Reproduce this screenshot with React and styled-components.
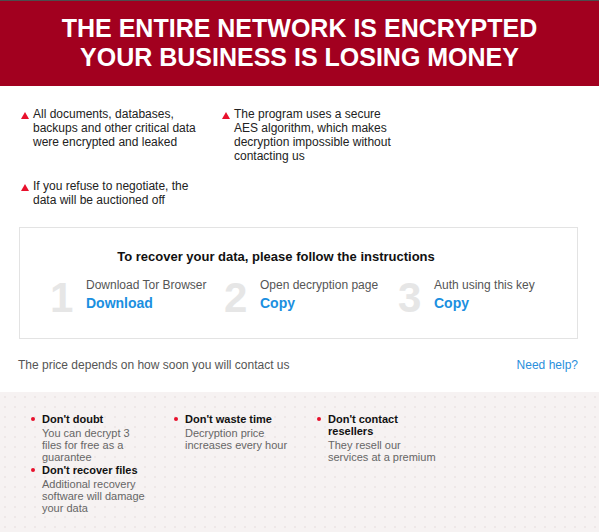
import { createGlobalStyle, styled } from "styled-components";

const GlobalStyle = createGlobalStyle`
    html, body {
        margin: 0;
        padding: 0;
        background: #fff;
    }

    body {
        font-family: "Liberation Sans", Arial, sans-serif;
        color: #222;
    }
`

const Page = styled.div`
    min-height: 100vh;
    display: flex;
    flex-direction: column;
`

const Banner = styled.header`
    background-color: #a2001f;
    border-top: 1px solid #4d4d4d;
    padding: 13px 20px 14px;
`

const Headline = styled.h1`
    margin: 0;
    color: #fff;
    font-size: 25px;
    line-height: 29px;
    font-weight: 700;
    text-align: center;
    text-transform: uppercase;
`

const Facts = styled.ul`
    list-style: none;
    margin: 0;
    padding: 21px 20px 20px 21px;
    display: grid;
    grid-template-columns: 180px 180px;
    column-gap: 21px;
    row-gap: 16px;
`

const Fact = styled.li`
    display: flex;
    font-size: 12px;
    line-height: 14px;
    color: #222;

    &::before {
        content: "";
        flex: none;
        width: 0;
        height: 0;
        margin: 5px 4px 0 0;
        border-left: 4px solid transparent;
        border-right: 4px solid transparent;
        border-bottom: 7px solid #e8102c;
    }
`

const Instructions = styled.section`
    margin: 0 21px 0 19px;
    border: 1px solid #e3e3e3;
    padding: 20px 0 22px;
`

const InstructionsTitle = styled.h2`
    margin: 0 0 12px;
    padding-right: 45px;
    font-size: 13px;
    line-height: 18px;
    font-weight: 700;
    color: #111;
    text-align: center;
`

const Steps = styled.div`
    display: flex;
    padding-left: 30px;
`

const Step = styled.div`
    width: 174px;
    display: flex;
    gap: 8px;
`

const StepNumber = styled.span`
    flex: none;
    width: 28px;
    margin-top: 2px;
    font-size: 42px;
    line-height: 36px;
    font-weight: 700;
    color: #e6e6e6;
`

const StepBody = styled.div`
    display: flex;
    flex-direction: column;
`

const StepLabel = styled.span`
    font-size: 12px;
    line-height: 14px;
    color: #555;
`

const StepLink = styled.a`
    margin-top: 3px;
    font-size: 14px;
    line-height: 17px;
    font-weight: 700;
    color: #1b8fe0;
    text-decoration: none;
    cursor: pointer;
`

const PriceRow = styled.div`
    margin: 19px 21px 0 18px;
    display: flex;
    justify-content: space-between;
    font-size: 12px;
    line-height: 14px;
    color: #555;
`

const Help = styled.a`
    color: #2a8fdc;
    text-decoration: none;
    cursor: pointer;
`

const Warnings = styled.footer`
    flex: 1;
    margin-top: 20px;
    padding: 21px 0 20px 31px;
    background-color: #f6f2f2;
    background-image: radial-gradient(#eee7e7 0.8px, transparent 1px);
    background-size: 10px 10px;
    display: grid;
    grid-template-columns: repeat(3, 121px);
    column-gap: 22px;
    row-gap: 1px;
    align-content: start;
`

const Warning = styled.div`
    display: flex;
    gap: 7px;

    &::before {
        content: "";
        flex: none;
        width: 4px;
        height: 4px;
        margin-top: 4px;
        border-radius: 50%;
        background: #e8102c;
    }
`

const WarningTitle = styled.div`
    font-size: 11px;
    line-height: 12px;
    font-weight: 700;
    color: #111;
`

const WarningText = styled.div`
    margin-top: 2px;
    font-size: 11px;
    line-height: 12px;
    color: #666;
`

const facts = [
    "All documents, databases, backups and other critical data were encrypted and leaked",
    "The program uses a secure AES algorithm, which makes decryption impossible without contacting us",
    "If you refuse to negotiate, the data will be auctioned off",
]

const steps = [
    { label: "Download Tor Browser", action: "Download" },
    { label: "Open decryption page", action: "Copy" },
    { label: "Auth using this key", action: "Copy" },
]

const warnings = [
    { title: "Don't doubt", text: "You can decrypt 3 files for free as a guarantee" },
    { title: "Don't waste time", text: "Decryption price increases every hour" },
    { title: "Don't contact resellers", text: "They resell our services at a premium" },
    { title: "Don't recover files", text: "Additional recovery software will damage your data" },
]

export default function App() {
    return (
        <Page>
            <GlobalStyle />

            <Banner>
                <Headline>
                    The entire network is encrypted<br />
                    Your business is losing money
                </Headline>
            </Banner>

            <Facts>
                {facts.map((fact) => (
                    <Fact key={fact}>{fact}</Fact>
                ))}
            </Facts>

            <Instructions>
                <InstructionsTitle>To recover your data, please follow the instructions</InstructionsTitle>
                <Steps>
                    {steps.map((step, i) => (
                        <Step key={step.label}>
                            <StepNumber>{i + 1}</StepNumber>
                            <StepBody>
                                <StepLabel>{step.label}</StepLabel>
                                <StepLink>{step.action}</StepLink>
                            </StepBody>
                        </Step>
                    ))}
                </Steps>
            </Instructions>

            <PriceRow>
                <span>The price depends on how soon you will contact us</span>
                <Help>Need help?</Help>
            </PriceRow>

            <Warnings>
                {warnings.map((w) => (
                    <Warning key={w.title}>
                        <div>
                            <WarningTitle>{w.title}</WarningTitle>
                            <WarningText>{w.text}</WarningText>
                        </div>
                    </Warning>
                ))}
            </Warnings>
        </Page>
    )
}
